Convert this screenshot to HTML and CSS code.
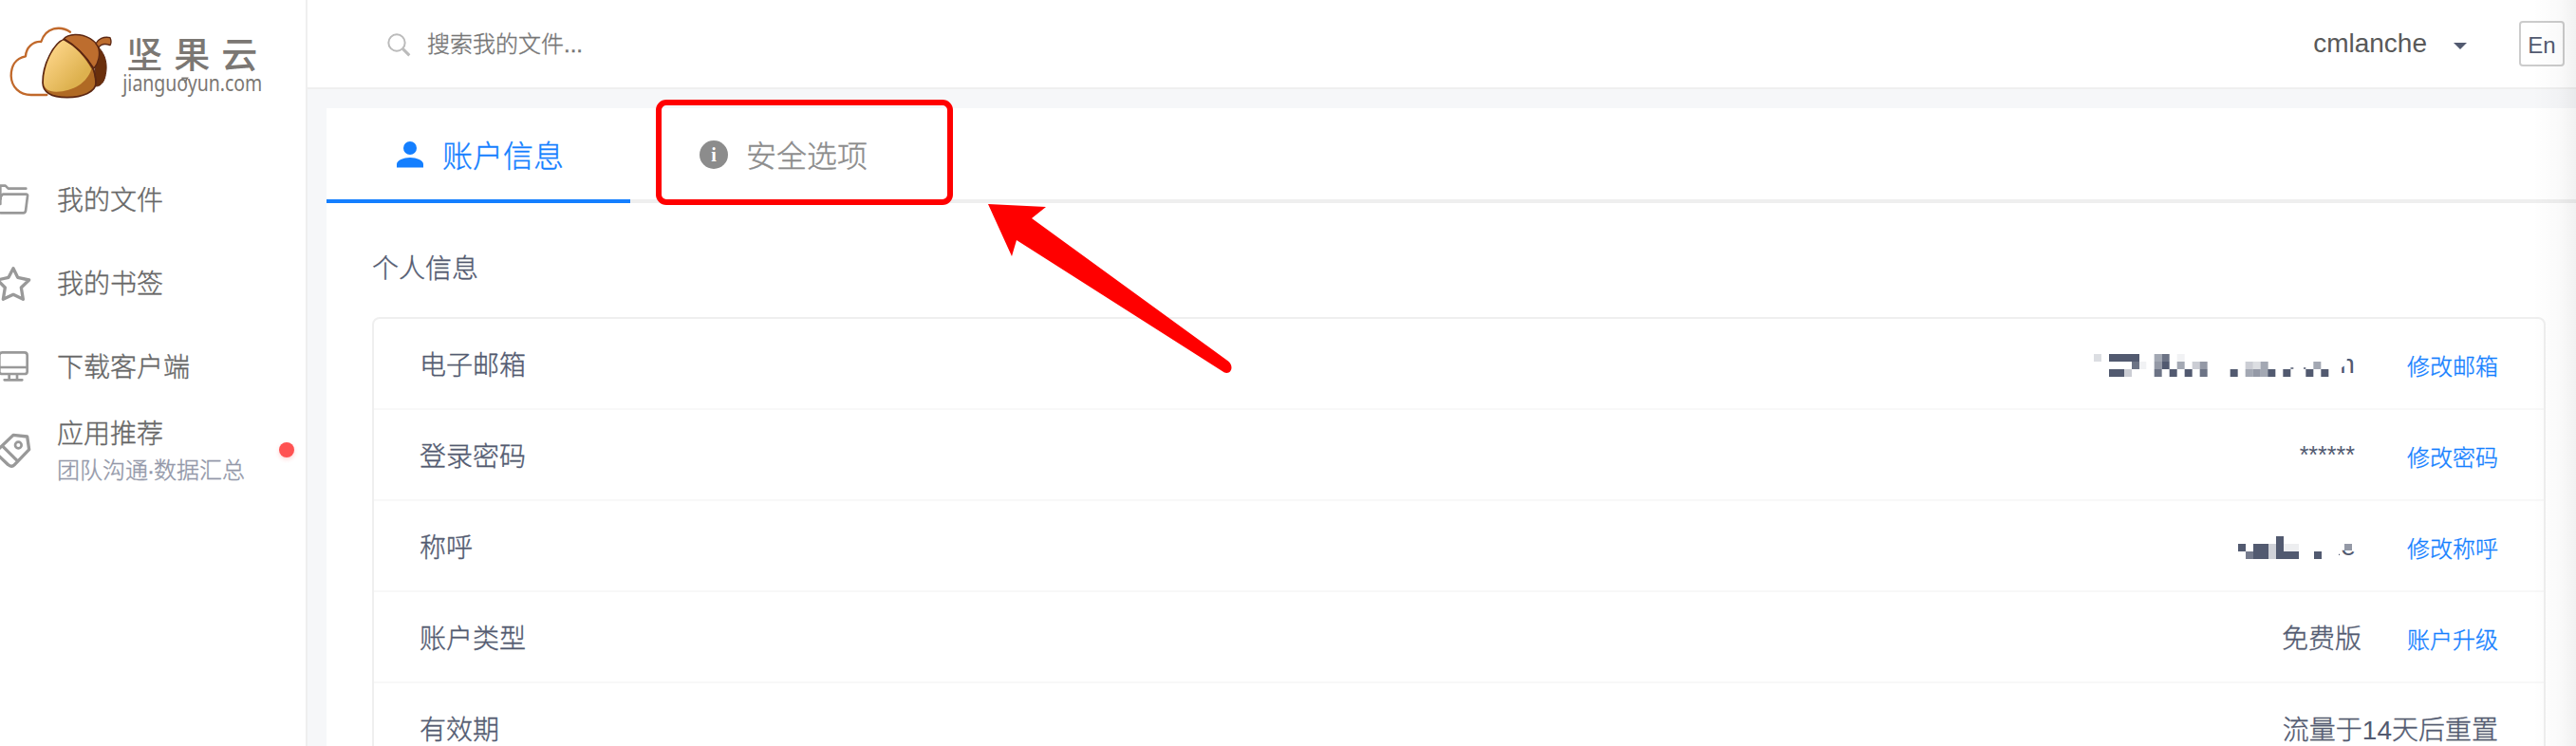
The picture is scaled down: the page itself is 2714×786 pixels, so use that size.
FILE: index.html
```html
<!DOCTYPE html>
<html lang="zh-CN">
<head>
<meta charset="utf-8">
<title>坚果云 - 账户信息</title>
<link rel="stylesheet" href="styles.css">
</head>
<body>
<div class="app">
  <aside class="sidebar">
    <svg class="logo" viewBox="0 0 966 390">
      <defs>
        <linearGradient id="nut" x1="0" y1="0" x2="1" y2="1">
          <stop offset="0.1" stop-color="#ffd78c"/><stop offset="0.75" stop-color="#ddb14e"/>
        </linearGradient>
      </defs>
      <path class="cloud" d="M222 101C190 80 145 86 130 132C105 130 82 150 81 178C48 184 35 210 35 240C36 275 62 300 98 300H148"/>
      <path class="acorn-dark" d="M312 150C335 175 340 205 334 235C330 258 320 272 304 273L300 220Z"/>
      <path class="acorn-cap" d="M200 124C215 106 255 104 285 122C300 132 306 138 309 146C319 170 311 200 297 216C270 175 240 145 200 124Z"/>
      <path class="acorn-cap" d="M303 138C309 124 328 114 348 119C352 128 352 136 348 143C330 136 320 138 312 150Z"/>
      <path class="acorn-low" d="M204 124C170 135 134 205 135 262C136 295 165 308 212 308C262 308 303 290 303 262C302 245 300 228 292 213C270 177 240 145 204 124Z"/>
      <path fill="url(#nut)" d="M203 126C170 140 138 205 138 262C139 280 152 290 178 290C232 288 275 262 289 218C268 180 238 147 203 126Z"/>
      <path class="acorn-line" d="M200 124C240 145 275 180 295 218C302 233 303 248 303 268"/>
      <text class="brand" x="400 550 700" y="212">坚果云</text>
      <text class="domain" x="388" y="288" textLength="441" lengthAdjust="spacingAndGlyphs">jianguoyun.com</text>
      <path class="domain-mark" d="M574 247H592L584 262"/>
    </svg>
    <nav class="nav">
      <a class="nav-item">
        <svg class="nav-icon" viewBox="0 0 102 120"><path d="M0 77H17L26 86H82M2 120V112L9 104H82Q88 104 87 110L81 157Q80 163 74 163H2M1 77V135" transform="translate(0 -60)"/></svg>
        <span class="nav-text">我的文件</span>
      </a>
      <a class="nav-item">
        <svg class="nav-icon" viewBox="0 0 102 120"><path class="bold" d="M42 14L56 43L92 51L67 75L73 112L42 97L10 112L16 75L-8 51L27 43Z"/></svg>
        <span class="nav-text">我的书签</span>
      </a>
      <a class="nav-item">
        <svg class="nav-icon" viewBox="0 0 102 120"><path d="M-2 25Q-2 16 7 16H77Q86 16 86 25V77Q86 84 77 84H7Q-2 84 -2 77ZM-2 63H86M29 84V102M54 84V102M14 103H70"/></svg>
        <span class="nav-text">下载客户端</span>
      </a>
      <a class="nav-item nav-apps">
        <svg class="nav-icon" viewBox="0 0 102 120"><path class="bold" d="M-10 63L42 13L86 18L92 59L46 107Q36 117 26 107L-10 73M9 49L52 92"/><circle cx="58" cy="45" r="10"/></svg>
        <span class="nav-text">应用推荐<small>团队沟通<b>·</b>数据汇总</small></span>
        <i class="dot"></i>
      </a>
    </nav>
  </aside>

  <div class="main">
    <header class="topbar">
      <svg class="search-icon" viewBox="0 0 75 75"><circle cx="30" cy="30" r="26"/><path d="M49 49L70 70"/></svg>
      <span class="search-text">搜索我的文件...</span>
      <span class="user">cmlanche</span>
      <i class="caret"></i>
      <span class="lang">En</span>
    </header>

    <section class="panel">
      <div class="tabs">
        <div class="tab active">
          <svg class="tab-icon" viewBox="0 0 28 28"><circle cx="14" cy="7" r="7"/><path d="M0 27.500V24C0 20 7 17 14 17S28 20 28 24V27.500Z"/></svg>
          <span>账户信息</span>
        </div>
        <div class="tab">
          <svg class="tab-icon info" viewBox="0 0 30 30"><circle cx="15" cy="15" r="15"/><text x="15" y="21.500" text-anchor="middle">i</text></svg>
          <span>安全选项</span>
          <div class="highlight"></div>
        </div>
      </div>

      <div class="content">
        <h2 class="title">个人信息</h2>
        <div class="card">
          <div class="row">
            <span class="label">电子邮箱</span>
            <svg class="mosaic email" viewBox="45 18 846 288">
              <defs><clipPath id="cutN"><path d="M831 175L848 165L848 140H875V200H831Z"/></clipPath></defs>
              <g fill="#525a70">
                <path d="M96 132h96v24h-96zM96 180h48v24h-48zM263 156h24v24h-24zM287 180h24v24h-24zM335 180h24v24h-24zM479 180h24v24h-24zM598 180h24v24h-24zM646 180h24v24h-24zM718 180h24v24h-24zM766 180h24v24h-24zM670 175h9v4h-9zM711 175h7v4h-7z"/>
                <path opacity=".85" d="M168 156h24v24h-24zM263 132h24v24h-24zM239 180h24v24h-24zM383 180h24v24h-24z"/>
                <path opacity=".62" d="M239 156h24v24h-24zM383 156h24v24h-24zM551 180h24v24h-24z"/>
                <path opacity=".53" d="M239 132h24v24h-24zM311 156h24v24h-24zM527 180h24v24h-24zM575 156h24v24h-24zM575 180h24v24h-24zM742 156h24v24h-24z"/>
                <path opacity=".3" d="M144 180h24v24h-24zM359 156h24v24h-24zM527 156h24v24h-24z"/>
                <path opacity=".2" d="M48 132h24v24h-24zM551 156h24v24h-24z"/>
                <path opacity=".08" d="M192 156h22v24h-22zM311 132h24v24h-24z"/>
              </g>
              <text class="rest" x="826" y="192" clip-path="url(#cutN)">n</text>
            </svg>
            <a class="link">修改邮箱</a>
          </div>
          <div class="row">
            <span class="label">登录密码</span>
            <span class="value stars">******</span>
            <a class="link">修改密码</a>
          </div>
          <div class="row">
            <span class="label">称呼</span>
            <svg class="mosaic name" viewBox="-39 264 600 288">
              <defs><clipPath id="cutE"><path d="M500 422h44v20h-44z"/></clipPath></defs>
              <g fill="#525a70">
                <path d="M174 402h24v24h-24zM222 402h48v48h-48zM294 378h24v48h48v24h-72zM414 426h24v24h-24zM492 434h3v4h-3z"/>
                <path opacity=".8" d="M198 426h24v24h-24z"/>
                <path opacity=".62" d="M510 402h24v21h-24z"/>
                <path opacity=".27" d="M270 402h24v48h-24z"/>
                <path opacity=".1" d="M318 402h48v24h-48z"/>
              </g>
              <text class="rest" x="499" y="438" clip-path="url(#cutE)">e</text>
            </svg>
            <a class="link">修改称呼</a>
          </div>
          <div class="row">
            <span class="label">账户类型</span>
            <span class="value">免费版</span>
            <a class="link">账户升级</a>
          </div>
          <div class="row">
            <span class="label">有效期</span>
            <span class="value last">流量于<b>14</b>天后重置</span>
          </div>
        </div>
      </div>
    </section>
  </div>
</div>
<svg class="arrow" viewBox="0 0 260 180"><path d="M1 0L62 3L47 15L254 165.500C260 170 258 180 250 177.500L31 38L26 55Z"/></svg>
<div class="edge-shade"></div>
</body>
</html>
```
FILE: styles.css
```css
* { box-sizing: border-box; }
body {
  margin: 0;
  height: 786px;
  overflow: hidden;
  position: relative;
  background: #fff;
  font-family: "Liberation Sans", "Noto Sans CJK SC", sans-serif;
  font-weight: 300;
  -webkit-text-stroke: .35px currentColor;
  color: #525a70;
}
svg { display: block; flex: none; -webkit-text-stroke: 0; }
b { font-weight: inherit; }
.app { display: flex; height: 786px; overflow: hidden; }

.sidebar { width: 324px; flex: none; border-right: 2px solid #efefef; }
.logo { width: 322px; height: 130px; }
.cloud { fill: none; stroke: #c1692b; stroke-width: 7; stroke-linecap: round; stroke-linejoin: round; }
.acorn-cap { fill: #bd6d2e; stroke: #5c2712; stroke-width: 4; stroke-linejoin: round; }
.acorn-dark { fill: #6a2f0c; stroke: #5c2712; stroke-width: 3; }
.acorn-low { fill: #b06a24; stroke: #5c2712; stroke-width: 5; }
.acorn-line { fill: none; stroke: #5c2712; stroke-width: 4; }
.brand { font: 500 114px "Noto Sans CJK SC", sans-serif; fill: #7b7773; }
.domain { font: 400 68px "Noto Sans", sans-serif; fill: #7b7773; }
.domain-mark { fill: none; stroke: #7b7773; stroke-width: 5; }

.nav { padding-top: 36px; }
.nav-item { display: flex; align-items: center; height: 88px; color: #666; }
.nav-icon { width: 34px; height: 40px; fill: none; stroke: #999; stroke-width: 8; stroke-linecap: round; stroke-linejoin: round; }
.nav-icon .bold { stroke-width: 10; }
.nav-text { margin-left: 26px; padding-top: 3px; font-size: 28px; line-height: 40px; }
.nav-text small { display: block; font-size: 24px; line-height: 36px; color: #9297a8; }
.nav-text small b { margin: 0 -1px; }
.dot { width: 16px; height: 16px; margin-left: auto; margin-right: 12px; border-radius: 50%; background: #ff5252; box-shadow: 0 2px 4px rgba(255, 82, 82, .25); }

.main { flex: 1; min-width: 0; background: #f6f7f9; }
.topbar { display: flex; align-items: center; height: 94px; padding: 0 12px 0 84px; border-bottom: 2px solid #efefef; background: #fff; }
.search-icon { width: 25px; height: 25px; margin-top: 3px; fill: none; stroke: #bbb; stroke-width: 6; }
.search-icon path { stroke-width: 9; }
.search-text { margin-left: 17px; padding-top: 1px; font-size: 24px; line-height: 36px; color: #757575; }
.user { margin-left: auto; font-size: 28px; line-height: 36px; color: #595959; -webkit-text-stroke: 0; }
.caret { margin: 4px 55px 0 28px; border: 7px solid transparent; border-top-color: #525a70; border-bottom: 0; }
.lang { width: 48px; height: 48px; border: 2px solid #ccc; border-radius: 4px; font-size: 24px; line-height: 48px; text-align: center; -webkit-text-stroke: 0; }

.panel { margin: 20px 0 0 20px; height: 700px; background: #fff; }
.tabs { display: flex; height: 100px; box-shadow: inset 0 -4px #efefef; }
.tab { position: relative; display: flex; align-items: center; width: 320px; padding: 0 0 0 74px; border-bottom: 4px solid transparent; font-size: 32px; color: #8c8c8c; }
.tab.active { color: #147fff; border-color: #147fff; }
.tab-icon { width: 28px; height: 28px; margin-top: 2px; margin-right: 20px; fill: currentColor; }
.tab-icon.info { width: 30px; height: 30px; margin: 2px 19px 0 -1px; }
.tab-icon text { font: 700 20px "Liberation Serif", serif; fill: #fff; }
.highlight { position: absolute; left: 27px; top: -9px; width: 313px; height: 111px; border: 6px solid #f00; border-radius: 11px; }

.content { padding: 50px 32px 0 48px; }
.title { margin: 0 0 30px; font-size: 28px; line-height: 40px; font-weight: 300; }
.card { border: 2px solid #efefef; border-radius: 8px; height: 520px; }
.row { display: flex; align-items: center; height: 96px; padding: 0 48px; border-bottom: 2px solid #f8f8f8; font-size: 28px; }
.label { margin-right: auto; }
.link { width: 96px; margin-left: 48px; padding-top: 2px; font-size: 24px; color: #147fff; }
.stars { font-size: 25px; margin-right: 7px; -webkit-text-stroke: 0; }
.last b { -webkit-text-stroke: 0; }
.mosaic { height: 96px; margin-right: 1px; }
.mosaic.email { width: 282px; }
.mosaic.name { width: 200px; }
.rest { font: 84px "Liberation Sans", sans-serif; fill: #525a70; }

.arrow { position: absolute; left: 1040px; top: 215px; width: 260px; height: 180px; fill: #f00; }
.edge-shade { position: absolute; right: 0; top: 0; width: 46px; height: 786px; background: linear-gradient(to right, rgba(0, 0, 0, 0), rgba(0, 0, 0, .02) 60%, rgba(0, 0, 0, .055)); }
```
